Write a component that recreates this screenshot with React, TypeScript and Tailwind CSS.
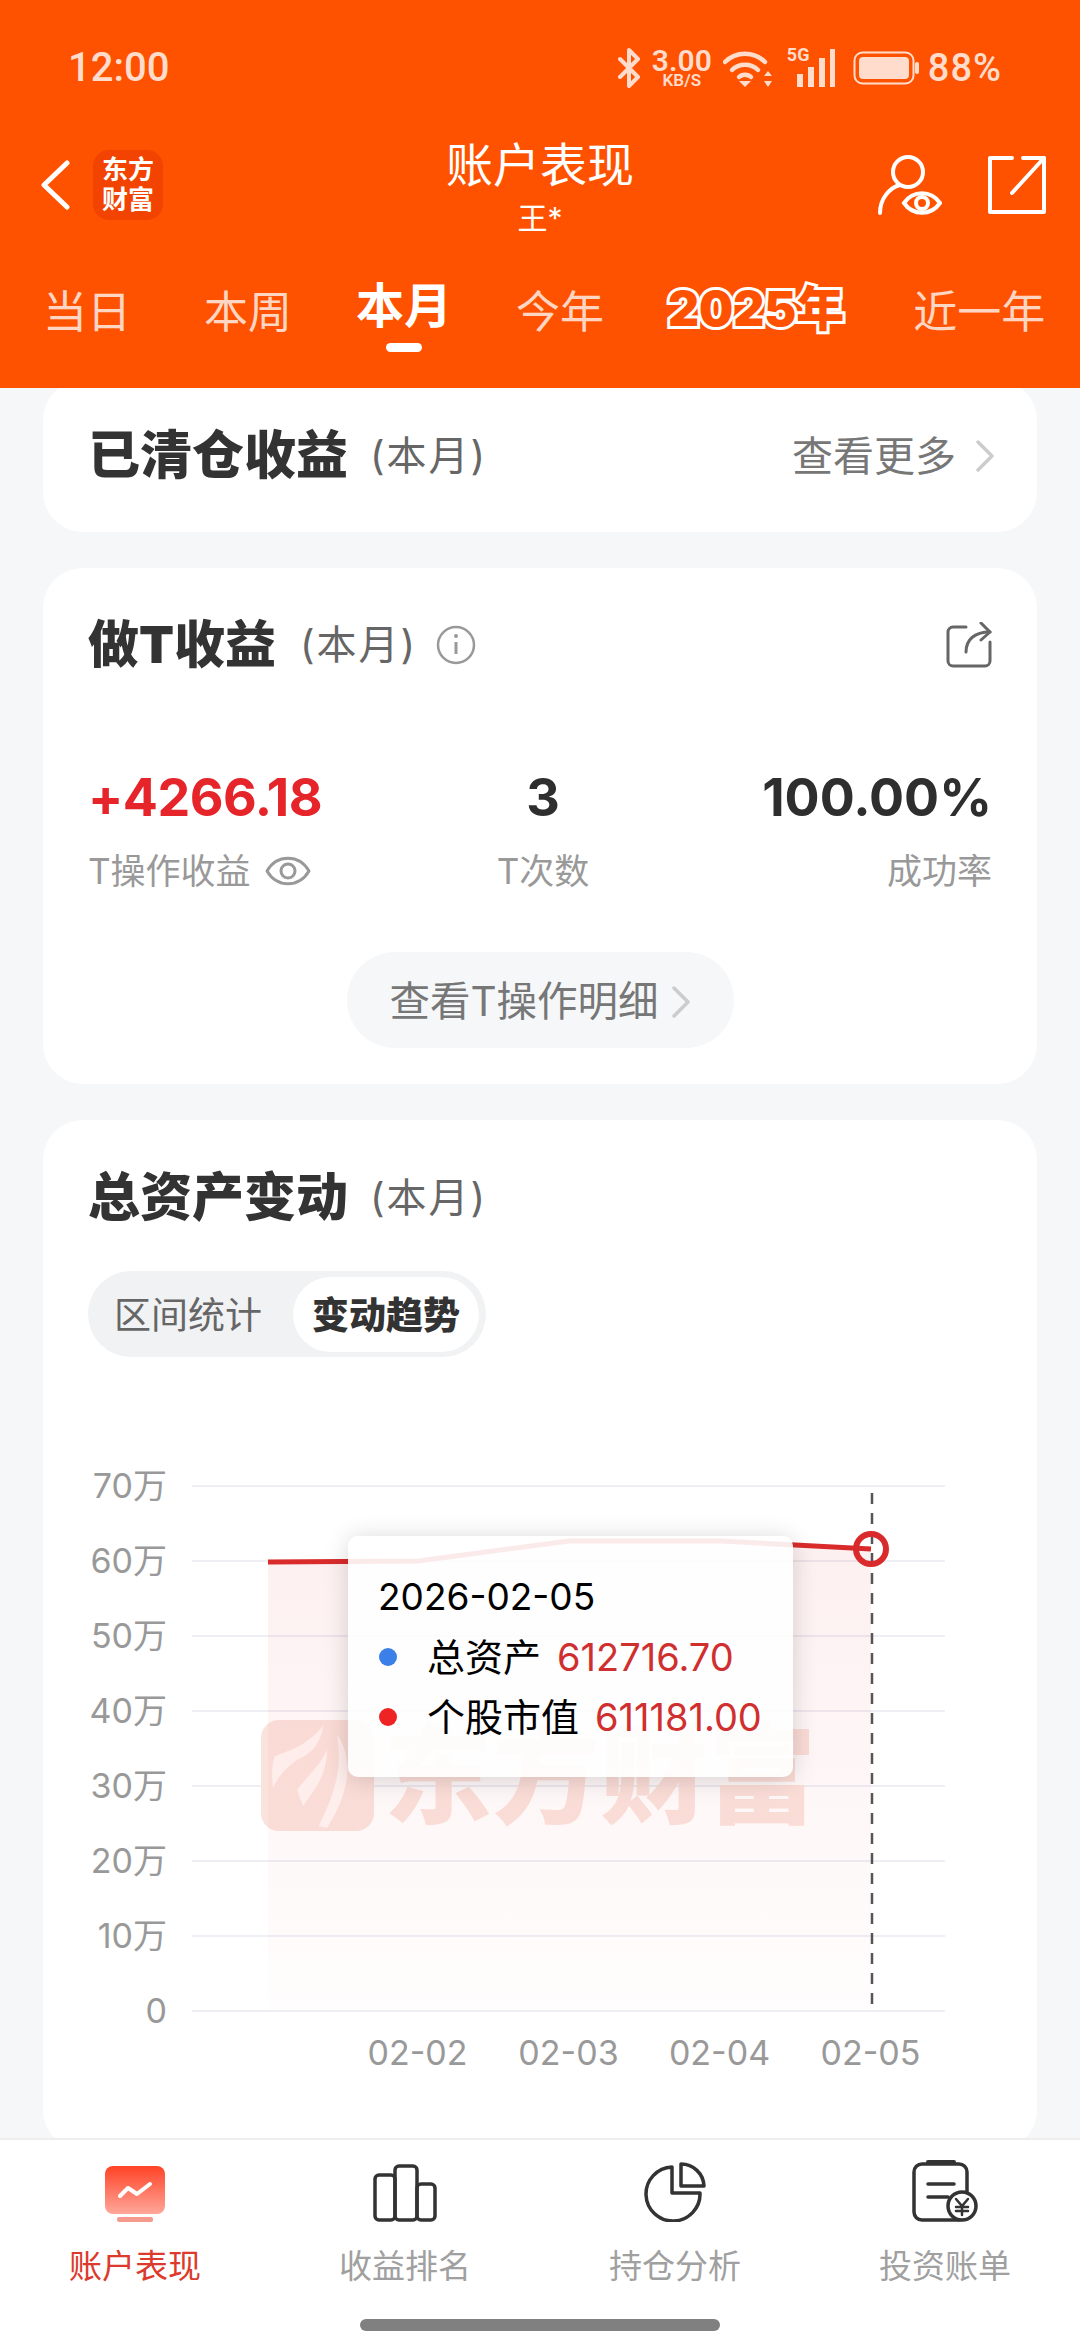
import React from 'react';

const yLabels = ['70万', '60万', '50万', '40万', '30万', '20万', '10万', '0'];
const xLabels = ['02-02', '02-03', '02-04', '02-05'];

function Chevron({ className }: { className: string }) {
  return (
    <svg viewBox="0 0 20 34" className={className} fill="none" stroke="currentColor" strokeWidth="3.5" strokeLinecap="round" strokeLinejoin="round">
      <path d="M3 3l14 14L3 31" />
    </svg>
  );
}

function Period() {
  return <span className="text-[40px] leading-[60px] tracking-[2px] text-[#666]">(本月)</span>;
}

function StatusBar() {
  return (
    <div className="mt-[44px] flex h-[48px] items-center justify-between pl-[68px] pr-[78px] font-['Roboto','Noto_Sans_CJK_SC',sans-serif] text-[#ffdccb]">
      <span className="text-[40px] font-medium leading-[48px]">12:00</span>
      <div className="flex items-center">
        <svg viewBox="0 0 24 40" className="h-[40px] w-[24px]" fill="none" stroke="currentColor" strokeWidth="4" strokeLinejoin="round" strokeLinecap="round">
          <path d="M3 11l18 18-9 9V2l9 9L3 29" />
        </svg>
        <div className="ml-[12px] flex w-[58px] flex-col items-center font-semibold">
          <span className="h-[25px] text-[30px] leading-[25px]">3.00</span>
          <span className="h-[15px] text-[17px] leading-[15px]">KB/S</span>
        </div>
        <svg viewBox="0 0 50 38" className="ml-[12px] h-[38px] w-[50px]" fill="none" stroke="currentColor" strokeWidth="4.5" strokeLinecap="round">
          <path d="M2 13C13 2 31 2 42 13" />
          <path d="M9 21c7-7 19-7 26 0" />
          <path d="M16 28c3-3 9-3 12 0" />
          <path d="M22 38l-6-6h12z" fill="currentColor" stroke="none" />
          <path d="M45 22l4 5h-8zM45 38l-4-6h8z" fill="currentColor" stroke="none" />
        </svg>
        <div className="relative ml-[14px] h-[38px] w-[50px]">
          <span className="absolute left-0 top-[-3px] text-[18px] font-bold leading-[18px]">5G</span>
          <svg viewBox="0 0 50 38" className="h-[38px] w-[50px]" fill="currentColor">
            <rect x="10" y="25" width="6" height="13" />
            <rect x="21" y="18" width="6" height="20" />
            <rect x="32" y="9" width="6" height="29" />
            <rect x="43" y="0" width="5" height="38" />
          </svg>
        </div>
        <svg viewBox="0 0 66 34" className="ml-[16px] h-[34px] w-[66px]" fill="none" stroke="currentColor">
          <rect x="1.5" y="1.5" width="59" height="31" rx="8" strokeWidth="2" />
          <rect x="6" y="6" width="50" height="22" rx="4" fill="#ffdccb" stroke="none" />
          <rect x="62" y="11" width="4" height="12" rx="2" fill="currentColor" stroke="none" />
        </svg>
        <span className="ml-[9px] text-[38px] font-medium leading-[48px] tracking-[1px]">88%</span>
      </div>
    </div>
  );
}

function Header() {
  return (
    <header className="relative z-10 h-[388px] shrink-0 bg-[#ff5200]">
      <StatusBar />
      <div className="mt-[42px] grid h-[100px] grid-cols-[1fr_auto_1fr] text-white">
        <div className="flex items-center pl-[40px]">
          <svg viewBox="0 0 30 50" className="h-[50px] w-[30px]" fill="none" stroke="currentColor" strokeWidth="5" strokeLinecap="round" strokeLinejoin="round">
            <path d="M27 3L4 25l23 22" />
          </svg>
          <div className="ml-[23px] flex h-[70px] w-[70px] flex-col items-center justify-center rounded-[16px] bg-[#f24400] text-[26px] font-bold leading-[30px]">
            <span>东方</span>
            <span>财富</span>
          </div>
        </div>
        <div className="flex flex-col items-center">
          <span className="text-[47px] leading-[62px]">账户表现</span>
          <span className="mt-[5px] text-[30px] leading-[34px]">王*</span>
        </div>
        <div className="flex items-center justify-end pr-[33px]">
          <svg viewBox="0 0 64 60" className="h-[60px] w-[64px]" fill="none" stroke="currentColor" strokeWidth="4" strokeLinecap="round">
            <circle cx="30" cy="17" r="15" />
            <path d="M2 58c0-14 9-25 20-28" />
            <path d="M26 48c9-13 27-13 36 0c-9 13-27 13-36 0z" />
            <circle cx="44" cy="48" r="6" />
          </svg>
          <svg viewBox="0 0 60 60" className="ml-[45px] h-[60px] w-[60px]" fill="none" stroke="currentColor" strokeWidth="4" strokeLinecap="round" strokeLinejoin="round">
            <path d="M25 3H3v54h54V3H36" />
            <path d="M57 3L25 38" />
          </svg>
        </div>
      </div>
      <div className="mt-[50px] flex items-end pl-[43px] text-[44px] leading-[56px] text-[#ffd6c4]">
        <span className="mr-[73px]">当日</span>
        <span className="mr-[64px]">本周</span>
        <div className="relative mr-[64px]">
          <span className="block text-[48px] font-bold leading-[56px] text-white -translate-y-[6px]">本月</span>
          <div className="absolute left-[30px] top-[59px] h-[9px] w-[36px] rounded-full bg-white" />
        </div>
        <span className="mr-[64px]">今年</span>
        <span className="mr-[69px] text-[48px] font-black text-[#ff5200] -translate-y-[3px] [-webkit-text-stroke:6px_white] [paint-order:stroke_fill]">2025年</span>
        <span>近一年</span>
      </div>
    </header>
  );
}

function TradeCard() {
  return (
    <section className="mt-[36px] h-[516px] rounded-[40px] bg-white px-[45px] pt-[47px]">
      <div className="flex h-[60px] items-center">
        <span className="text-[51px] font-black leading-[60px] text-[#333]">做T收益</span>
        <span className="ml-[24px]"><Period /></span>
        <svg viewBox="0 0 40 40" className="ml-[19px] h-[40px] w-[40px] text-[#999]" fill="none" stroke="currentColor" strokeWidth="2.5">
          <circle cx="20" cy="20" r="18" />
          <path d="M20 17v12" strokeWidth="3" />
          <circle cx="20" cy="11" r="2" fill="currentColor" stroke="none" />
        </svg>
        <svg viewBox="0 0 46 46" className="ml-auto h-[46px] w-[46px] text-[#666]" fill="none" stroke="currentColor" strokeWidth="3" strokeLinecap="round" strokeLinejoin="round">
          <path d="M20 5H7a5 5 0 0 0-5 5v29a5 5 0 0 0 5 5h32a5 5 0 0 0 5-5V20" />
          <path d="M20 30c0-12 8-20 24-20" />
          <path d="M35 1l9 9-9 8" />
        </svg>
      </div>
      <div className="mt-[93px] grid grid-cols-3 text-[52px] font-bold leading-[60px] text-[#2e2e2e]">
        <span className="whitespace-nowrap tracking-[-0.5px] text-[#e5252a]">+4266.18</span>
        <span className="pl-[6px] text-center">3</span>
        <span className="whitespace-nowrap text-right">100.00%</span>
      </div>
      <div className="mt-[21px] grid grid-cols-3 text-[35px] leading-[44px] text-[#999]">
        <div className="flex items-center">
          <span>T操作收益</span>
          <svg viewBox="0 0 46 38" className="ml-[14px] h-[38px] w-[46px]" fill="none" stroke="currentColor" strokeWidth="3" strokeLinejoin="round">
            <path d="M2 19C12 2 34 2 44 19C34 36 12 36 2 19z" />
            <circle cx="23" cy="19" r="7" />
          </svg>
        </div>
        <span className="pl-[6px] text-center">T次数</span>
        <span className="text-right">成功率</span>
      </div>
      <div className="mx-auto mt-[59px] flex h-[96px] w-[387px] items-center justify-center rounded-full bg-[#f6f7f9] pt-[3px] text-[40.5px] leading-[60px] text-[#777]">
        <span>查看T操作明细</span>
        <Chevron className="ml-[12px] h-[34px] w-[20px] text-[#ccc]" />
      </div>
    </section>
  );
}

function Chart() {
  return (
    <div className="relative mt-[91px] w-[904px]">
      {yLabels.map((label) => (
        <div key={label} className="flex h-[75px] items-center">
          <span className="w-[79px] text-right text-[34px] text-[#999]">{label}</span>
          <div className="ml-[25px] h-[2px] w-[753px] bg-[#eeeef5]" />
        </div>
      ))}
      <div className="-mt-[17px] ml-[254px] flex text-[34px] leading-[44px] text-[#999]">
        {xLabels.map((label) => (
          <span key={label} className="w-[151px] text-center">{label}</span>
        ))}
      </div>

      {/* watermark, sits under the line */}
      <div className="absolute left-[173px] top-[272px] flex items-center">
        <svg viewBox="0 0 113 111" className="h-[111px] w-[113px]">
          <rect width="113" height="111" rx="18" fill="#fbe3dd" />
          <path d="M12 68C10 50 12 40 14 36C30 30 45 26 62 6C60 24 50 34 36 40C28 46 18 54 12 68z" fill="#fff6f3" />
          <path d="M36 70C44 58 56 50 66 30C66 56 52 72 42 86z" fill="#fff6f3" />
          <path d="M58 106C64 90 84 60 76 14C96 44 84 80 66 108z" fill="#fff6f3" />
        </svg>
        <span className="ml-[10px] text-[108px] font-black leading-[111px] text-[#fbe3dd]">东方财富</span>
      </div>

      <svg viewBox="88 1449 904 600" className="absolute left-0 top-0 h-[600px] w-[904px]" fill="none">
        <defs>
          <linearGradient id="area" x1="0" y1="0" x2="0" y2="1">
            <stop offset="0" stopColor="#e5252a" stopOpacity="0.07" />
            <stop offset="1" stopColor="#e5252a" stopOpacity="0.01" />
          </linearGradient>
        </defs>
        <path d="M268 1563L418 1562L569 1542L721 1542L871 1550V2011H268z" fill="url(#area)" />
        <path d="M268 1563L418 1562L569 1542L721 1542L871 1550" stroke="#d92b2b" strokeWidth="5" />
        <path d="M872 1494V2011" stroke="#555" strokeWidth="2.5" strokeDasharray="11 9" />
        <circle cx="871" cy="1550" r="15" stroke="#d92b2b" strokeWidth="6" />
      </svg>

      {/* tooltip */}
      <div className="absolute left-[260px] top-[88px] h-[241px] w-[445px] rounded-[10px] bg-white/90 pl-[30px] pt-[39px] text-[37px] leading-[44px] text-black shadow-[0_2px_24px_rgba(0,0,0,0.16)]">
        <div>2026-02-05</div>
        <div className="mt-[16px] flex items-center">
          <span className="ml-[1px] h-[18px] w-[18px] rounded-full bg-[#3b7fe8]" />
          <span className="ml-[30px] text-[38px]">总资产</span>
          <span className="ml-[16px] text-[38px] text-[#d02f2f]">612716.70</span>
        </div>
        <div className="mt-[16px] flex items-center">
          <span className="ml-[1px] h-[18px] w-[18px] rounded-full bg-[#ee2424]" />
          <span className="ml-[30px] text-[38px]">个股市值</span>
          <span className="ml-[16px] text-[38px] text-[#d02f2f]">611181.00</span>
        </div>
      </div>
    </div>
  );
}

function AssetCard() {
  return (
    <section className="mt-[36px] h-[1030px] rounded-[40px] bg-white px-[45px] pt-[48px]">
      <div className="flex h-[60px] items-center">
        <span className="text-[52px] font-black leading-[60px] text-[#333]">总资产变动</span>
        <span className="ml-[22px]"><Period /></span>
      </div>
      <div className="mt-[43px] flex h-[86px] w-[398px] items-center justify-between rounded-full bg-[#f1f2f4] pl-[26px] pr-[7px]">
        <span className="pt-[3px] text-[37px] text-[#666]">区间统计</span>
        <span className="flex h-[75px] w-[186px] items-center justify-center rounded-full bg-white pt-[3px] text-[37px] font-black text-[#333]">变动趋势</span>
      </div>
      <Chart />
    </section>
  );
}

function BottomNav() {
  return (
    <nav className="relative z-10 h-[214px] shrink-0 border-t-2 border-[#eeeeee] bg-white">
      <div className="grid h-[82px] grid-cols-4 items-end">
        <div className="flex justify-center">
          <svg viewBox="0 0 60 56" className="h-[56px] w-[60px]">
            <defs>
              <linearGradient id="navActive" x1="0" y1="0" x2="0" y2="1">
                <stop offset="0" stopColor="#ff4326" />
                <stop offset="1" stopColor="#ffa79a" />
              </linearGradient>
            </defs>
            <rect width="60" height="48" rx="8" fill="url(#navActive)" />
            <path d="M15 30l8-8 9 6 13-10" fill="none" stroke="#fff" strokeWidth="4" strokeLinecap="round" strokeLinejoin="round" />
            <rect x="12" y="51" width="36" height="5" rx="2" fill="#f79a8e" />
          </svg>
        </div>
        <div className="flex justify-center">
          <svg viewBox="0 0 64 58" className="h-[58px] w-[64px]" fill="none" stroke="#333" strokeWidth="3.5" strokeLinejoin="round">
            <rect x="2" y="11" width="20" height="45" rx="4" />
            <rect x="22" y="2" width="22" height="54" rx="4" />
            <rect x="44" y="20" width="18" height="36" rx="4" />
          </svg>
        </div>
        <div className="flex justify-center">
          <svg viewBox="0 0 62 60" className="h-[60px] w-[62px]" fill="none" stroke="#333" strokeWidth="3.5" strokeLinejoin="round">
            <path d="M28 5A27 27 0 1 0 56 31H28z" />
            <path d="M37 2A23 23 0 0 1 60 24H37z" />
          </svg>
        </div>
        <div className="flex justify-center">
          <svg viewBox="0 0 66 62" className="h-[62px] w-[66px]" fill="none" stroke="#333" strokeLinecap="round">
            <rect x="2" y="4" width="53" height="56" rx="8" strokeWidth="3.5" />
            <path d="M16 2h26" strokeWidth="4" />
            <path d="M16 24h26M16 37h20" strokeWidth="3.5" />
            <circle cx="50" cy="46" r="14" fill="#fff" strokeWidth="3.5" />
            <path d="M44 39l6 7 6-7M50 46v9M44 47h12M44 51h12" strokeWidth="2.5" />
          </svg>
        </div>
      </div>
      <div className="mt-[22px] grid grid-cols-4 text-center text-[33px] leading-[44px] text-[#a0a0a0]">
        <span className="text-[#dc3a2c]">账户表现</span>
        <span>收益排名</span>
        <span>持仓分析</span>
        <span>投资账单</span>
      </div>
      <div className="mx-auto mt-[31px] h-[12px] w-[360px] rounded-full bg-[#808080]" />
    </nav>
  );
}

export default function App() {
  return (
    <div className="flex h-[2352px] w-[1080px] flex-col overflow-hidden bg-[#f6f7f9] font-['Inter','Noto_Sans_CJK_SC',sans-serif]">
      <Header />
      <main className="flex-1 overflow-hidden px-[43px]">
        <section className="-mt-[8px] flex h-[152px] items-center rounded-[40px] bg-white pl-[45px] pr-[42px]">
          <span className="text-[52px] font-black leading-[60px] text-[#333]">已清仓收益</span>
          <span className="ml-[22px]"><Period /></span>
          <span className="ml-auto text-[41px] leading-[60px] text-[#777]">查看更多</span>
          <Chevron className="ml-[19px] h-[34px] w-[20px] text-[#ccc]" />
        </section>
        <TradeCard />
        <AssetCard />
      </main>
      <BottomNav />
    </div>
  );
}
